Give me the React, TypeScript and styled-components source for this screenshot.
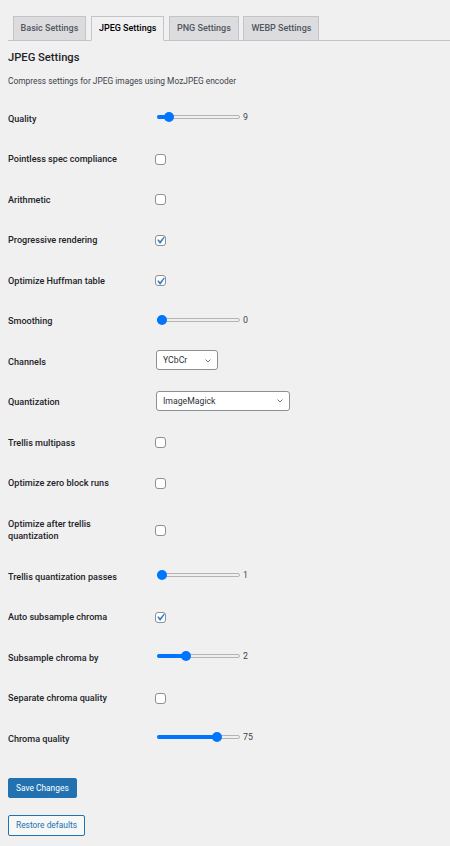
import React from "react";
import styled, { createGlobalStyle } from "styled-components";

const GlobalStyle = createGlobalStyle`
  html, body { margin: 0; padding: 0; background: #f0f0f1; }
  body {
    font-family: Roboto, "Noto Sans", sans-serif;
    color: #1d2327;
  }
  * { box-sizing: border-box; }
`;

const Page = styled.div`
  padding: 16px 0 40px 8px;
  width: 450px;
`;

const NavWrapper = styled.nav`
  display: flex;
  border-bottom: 1px solid #c3c4c7;
  height: 25px;
`;

const Tab = styled.div<{ $active?: boolean }>`
  margin-left: 4.6px;
  height: 25px;
  padding: 3px 7px;
  line-height: 17px;
  font-size: 9px;
  font-weight: 500;
  border: 1px solid #c3c4c7;
  border-bottom-color: ${(p) => (p.$active ? "#f0f0f1" : "#c3c4c7")};
  background: ${(p) => (p.$active ? "#f0f0f1" : "#dcdcde")};
  color: ${(p) => (p.$active ? "#000" : "#50575e")};
  white-space: nowrap;
`;

const Heading = styled.h2`
  margin: 9px 0 0;
  font-size: 11.2px;
  line-height: 16px;
  font-weight: 500;
  color: #1d2327;
`;

const Description = styled.p`
  margin: 9px 0 0;
  font-size: 8.4px;
  line-height: 13px;
  color: #3c434a;
`;

const Table = styled.div`
  margin-top: 10.5px;
  display: flex;
  flex-direction: column;
`;

const Row = styled.div`
  display: flex;
  align-items: center;
`;

const Label = styled.div`
  width: 147px;
  flex: none;
  padding: 14px 19px 14px 0;
  font-size: 9.1px;
  line-height: 12.5px;
  font-weight: 500;
  color: #1d2327;
`;

const Control = styled.div<{ $lift?: boolean }>`
  display: flex;
  align-items: center;
  margin-top: ${(p) => (p.$lift ? "-3px" : "0")};
`;

const SliderTrack = styled.div`
  position: relative;
  width: 83px;
  height: 4px;
  margin-left: 2px;
  border: 1px solid #b4b4b4;
  border-radius: 3px;
  background: #efefef;
`;

const SliderFill = styled.div`
  position: absolute;
  left: -1px;
  top: -1px;
  bottom: -1px;
  background: #0075ff;
  border-radius: 3px;
`;

const SliderThumb = styled.div`
  position: absolute;
  top: 50%;
  width: 10px;
  height: 10px;
  margin: -5px 0 0 -5px;
  border-radius: 50%;
  background: #0075ff;
`;

const Value = styled.span`
  margin-left: 3px;
  font-size: 8.8px;
  line-height: 12px;
  color: #3c434a;
`;

const Box = styled.div`
  position: relative;
  width: 11px;
  height: 11px;
  border: 1px solid #8c8f94;
  border-radius: 3px;
  background: #fff;
`;

const Check = styled.svg`
  position: absolute;
  left: -3px;
  top: -2.5px;
  width: 14.7px;
  height: 14.7px;
`;

const Select = styled.div<{ $w: number }>`
  position: relative;
  width: ${(p) => p.$w}px;
  height: 20px;
  margin-left: 1px;
  padding-left: 6px;
  border: 1px solid #8c8f94;
  border-radius: 3px;
  background: #fff;
  font-size: 8.7px;
  line-height: 18px;
  color: #2c3338;
`;

const Chevron = styled.svg`
  position: absolute;
  right: 4px;
  top: 4.5px;
  width: 10px;
  height: 10px;
`;

const Actions = styled.div`
  display: flex;
  flex-direction: column;
  align-items: flex-start;
  gap: 17px;
  margin-top: 19px;
`;

const PrimaryButton = styled.button`
  height: 20px;
  padding: 0 7px;
  border: 1px solid #2271b1;
  border-radius: 2px;
  background: #2271b1;
  color: #fff;
  font-family: inherit;
  font-size: 8.4px;
  line-height: 18px;
`;

const SecondaryButton = styled.button`
  height: 21px;
  padding: 0 7px;
  border: 1px solid #2271b1;
  border-radius: 2px;
  background: #f6f7f7;
  color: #2271b1;
  font-family: inherit;
  font-size: 8.4px;
  line-height: 19px;
`;

type Field =
  | { kind: "range"; label: string; value: number; min: number; max: number }
  | { kind: "check"; label: string; checked: boolean }
  | { kind: "select"; label: string; value: string; width: number };

const fields: Field[] = [
  { kind: "range", label: "Quality", value: 9, min: 0, max: 100 },
  { kind: "check", label: "Pointless spec compliance", checked: false },
  { kind: "check", label: "Arithmetic", checked: false },
  { kind: "check", label: "Progressive rendering", checked: true },
  { kind: "check", label: "Optimize Huffman table", checked: true },
  { kind: "range", label: "Smoothing", value: 0, min: 0, max: 100 },
  { kind: "select", label: "Channels", value: "YCbCr", width: 62 },
  { kind: "select", label: "Quantization", value: "ImageMagick", width: 134 },
  { kind: "check", label: "Trellis multipass", checked: false },
  { kind: "check", label: "Optimize zero block runs", checked: false },
  { kind: "check", label: "Optimize after trellis quantization", checked: false },
  { kind: "range", label: "Trellis quantization passes", value: 1, min: 1, max: 10 },
  { kind: "check", label: "Auto subsample chroma", checked: true },
  { kind: "range", label: "Subsample chroma by", value: 2, min: 1, max: 4 },
  { kind: "check", label: "Separate chroma quality", checked: false },
  { kind: "range", label: "Chroma quality", value: 75, min: 0, max: 100 },
];

function Slider({ value, min, max }: { value: number; min: number; max: number }) {
  const frac = (value - min) / (max - min);
  const x = 4 + frac * 73;
  return (
    <>
      <SliderTrack>
        <SliderFill style={{ width: x + 1 }} />
        <SliderThumb style={{ left: x }} />
      </SliderTrack>
      <Value>{value}</Value>
    </>
  );
}

function Checkbox({ checked }: { checked: boolean }) {
  return (
    <Box>
      {checked && (
        <Check viewBox="0 0 20 20">
          <path d="M14.83 4.89l1.34.94-5.81 8.38H9.02L5.78 9.67l1.34-1.25 2.57 2.4z" fill="#3582c4" />
        </Check>
      )}
    </Box>
  );
}

function Dropdown({ value, width }: { value: string; width: number }) {
  return (
    <Select $w={width}>
      {value}
      <Chevron viewBox="0 0 20 20">
        <path d="M5 7l5 5 5-5" fill="none" stroke="#50575e" strokeWidth="1.6" />
      </Chevron>
    </Select>
  );
}

export default function App() {
  return (
    <>
      <GlobalStyle />
      <Page>
        <NavWrapper>
          <Tab>Basic Settings</Tab>
          <Tab $active>JPEG Settings</Tab>
          <Tab>PNG Settings</Tab>
          <Tab>WEBP Settings</Tab>
        </NavWrapper>
        <Heading>JPEG Settings</Heading>
        <Description>Compress settings for JPEG images using MozJPEG encoder</Description>
        <Table>
          {fields.map((f) => (
            <Row key={f.label}>
              <Label>{f.label}</Label>
              {f.kind === "range" && (
                <Control $lift>
                  <Slider value={f.value} min={f.min} max={f.max} />
                </Control>
              )}
              {f.kind === "check" && (
                <Control>
                  <Checkbox checked={f.checked} />
                </Control>
              )}
              {f.kind === "select" && (
                <Control $lift>
                  <Dropdown value={f.value} width={f.width} />
                </Control>
              )}
            </Row>
          ))}
        </Table>
        <Actions>
          <PrimaryButton>Save Changes</PrimaryButton>
          <SecondaryButton>Restore defaults</SecondaryButton>
        </Actions>
      </Page>
    </>
  );
}
